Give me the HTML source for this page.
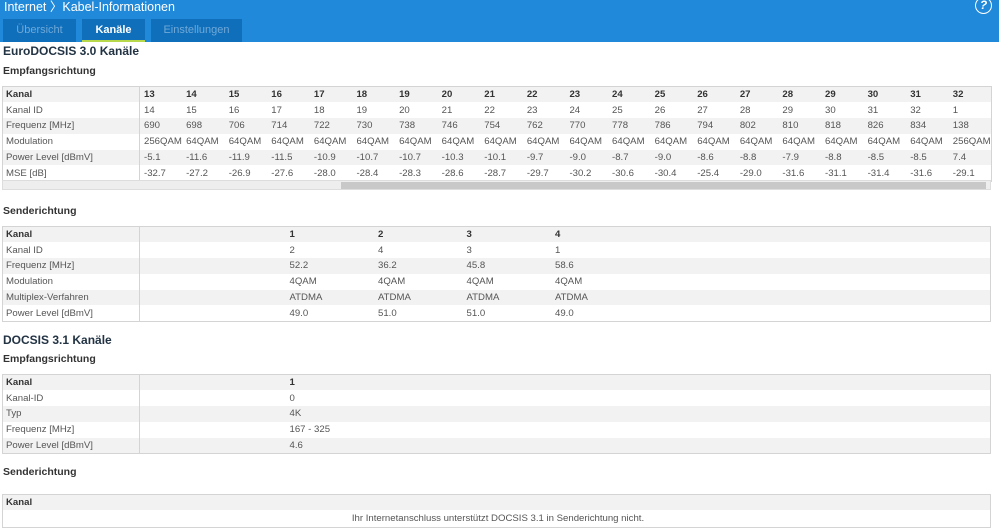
<!DOCTYPE html>
<html><head><meta charset="utf-8"><style>
*{margin:0;padding:0;box-sizing:border-box}
body{width:999px;height:529px;overflow:hidden;background:#fff;font-family:"Liberation Sans",sans-serif;color:#555;font-size:9.6px;position:relative}
.hdr{position:absolute;left:0;top:0;width:999px;height:42px;background:#2089d9}
.title{position:absolute;left:4px;top:-4px;color:#fff;font-size:12.5px}
.help{position:absolute;left:975px;top:-3px;width:17px;height:17px;border:1.5px solid #fff;border-radius:50%;color:#fff;font-size:12px;font-weight:bold;text-align:center;line-height:14px;font-style:italic}
.tab{position:absolute;top:19px;height:23px;background:#0f6fbb;color:#6fa8d8;font-size:11px;text-align:center;line-height:22px}
.tab.a{color:#fff;font-weight:bold;border-bottom:2px solid #b7d84a}
h2{position:absolute;left:3px;font-size:12px;font-weight:bold;color:#234}
h3{position:absolute;left:3px;font-size:10.5px;font-weight:bold;color:#333}
table{position:absolute;left:2px;width:989px;border-collapse:collapse;table-layout:fixed;border:1px solid #d4d4d4}
td{height:15.8px;padding:0 0 0 4px;white-space:nowrap;overflow:hidden;line-height:15px}
td:first-child{border-right:1px solid #d4d4d4;padding-left:3px}
tr:nth-child(odd){background:#f2f2f2}
tr:first-child td{font-weight:bold;color:#333}
.sb{position:absolute;left:2px;top:180px;width:989px;height:10px;background:#eee;border:1px solid #ddd}
.sb i{position:absolute;left:338px;top:1px;width:645px;height:7px;background:#c8c8c8}
</style></head><body>
<div class="hdr"><div class="title">Internet 〉Kabel-Informationen</div><div class="help">?</div>
<div class="tab" style="left:3px;width:73px">Übersicht</div>
<div class="tab a" style="left:82px;width:63px">Kanäle</div>
<div class="tab" style="left:151px;width:91px">Einstellungen</div></div>
<h2 style="top:44px">EuroDOCSIS 3.0 Kanäle</h2>
<h3 style="top:65px">Empfangsrichtung</h3>
<table style="top:86px"><colgroup><col style="width:137px"><col span="20" style="width:42.6px"></colgroup>
<tr><td>Kanal</td><td>13</td><td>14</td><td>15</td><td>16</td><td>17</td><td>18</td><td>19</td><td>20</td><td>21</td><td>22</td><td>23</td><td>24</td><td>25</td><td>26</td><td>27</td><td>28</td><td>29</td><td>30</td><td>31</td><td>32</td></tr>
<tr><td>Kanal ID</td><td>14</td><td>15</td><td>16</td><td>17</td><td>18</td><td>19</td><td>20</td><td>21</td><td>22</td><td>23</td><td>24</td><td>25</td><td>26</td><td>27</td><td>28</td><td>29</td><td>30</td><td>31</td><td>32</td><td>1</td></tr>
<tr><td>Frequenz [MHz]</td><td>690</td><td>698</td><td>706</td><td>714</td><td>722</td><td>730</td><td>738</td><td>746</td><td>754</td><td>762</td><td>770</td><td>778</td><td>786</td><td>794</td><td>802</td><td>810</td><td>818</td><td>826</td><td>834</td><td>138</td></tr>
<tr><td>Modulation</td><td>256QAM</td><td>64QAM</td><td>64QAM</td><td>64QAM</td><td>64QAM</td><td>64QAM</td><td>64QAM</td><td>64QAM</td><td>64QAM</td><td>64QAM</td><td>64QAM</td><td>64QAM</td><td>64QAM</td><td>64QAM</td><td>64QAM</td><td>64QAM</td><td>64QAM</td><td>64QAM</td><td>64QAM</td><td>256QAM</td></tr>
<tr><td>Power Level [dBmV]</td><td>-5.1</td><td>-11.6</td><td>-11.9</td><td>-11.5</td><td>-10.9</td><td>-10.7</td><td>-10.7</td><td>-10.3</td><td>-10.1</td><td>-9.7</td><td>-9.0</td><td>-8.7</td><td>-9.0</td><td>-8.6</td><td>-8.8</td><td>-7.9</td><td>-8.8</td><td>-8.5</td><td>-8.5</td><td>7.4</td></tr>
<tr><td>MSE [dB]</td><td>-32.7</td><td>-27.2</td><td>-26.9</td><td>-27.6</td><td>-28.0</td><td>-28.4</td><td>-28.3</td><td>-28.6</td><td>-28.7</td><td>-29.7</td><td>-30.2</td><td>-30.6</td><td>-30.4</td><td>-25.4</td><td>-29.0</td><td>-31.6</td><td>-31.1</td><td>-31.4</td><td>-31.6</td><td>-29.1</td></tr>
</table>
<div class="sb"><i></i></div>
<h3 style="top:205px">Senderichtung</h3>
<table style="top:226px"><colgroup><col style="width:137px"><col style="width:146px"><col span="4" style="width:88.5px"><col></colgroup>
<tr><td>Kanal</td><td></td><td>1</td><td>2</td><td>3</td><td>4</td><td></td></tr>
<tr><td>Kanal ID</td><td></td><td>2</td><td>4</td><td>3</td><td>1</td><td></td></tr>
<tr><td>Frequenz [MHz]</td><td></td><td>52.2</td><td>36.2</td><td>45.8</td><td>58.6</td><td></td></tr>
<tr><td>Modulation</td><td></td><td>4QAM</td><td>4QAM</td><td>4QAM</td><td>4QAM</td><td></td></tr>
<tr><td>Multiplex-Verfahren</td><td></td><td>ATDMA</td><td>ATDMA</td><td>ATDMA</td><td>ATDMA</td><td></td></tr>
<tr><td>Power Level [dBmV]</td><td></td><td>49.0</td><td>51.0</td><td>51.0</td><td>49.0</td><td></td></tr>
</table>
<h2 style="top:333px">DOCSIS 3.1 Kanäle</h2>
<h3 style="top:353px">Empfangsrichtung</h3>
<table style="top:374px"><colgroup><col style="width:137px"><col style="width:146px"><col></colgroup>
<tr><td>Kanal</td><td></td><td>1</td></tr>
<tr><td>Kanal-ID</td><td></td><td>0</td></tr>
<tr><td>Typ</td><td></td><td>4K</td></tr>
<tr><td>Frequenz [MHz]</td><td></td><td>167 - 325</td></tr>
<tr><td>Power Level [dBmV]</td><td></td><td>4.6</td></tr>
</table>
<h3 style="top:466px">Senderichtung</h3>
<table style="top:494px"><tr><td style="border-right:none">Kanal</td></tr>
<tr style="background:#fff"><td style="border-right:none;text-align:center;height:17px;font-weight:normal">Ihr Internetanschluss unterstützt DOCSIS 3.1 in Senderichtung nicht.</td></tr></table>
</body></html>
